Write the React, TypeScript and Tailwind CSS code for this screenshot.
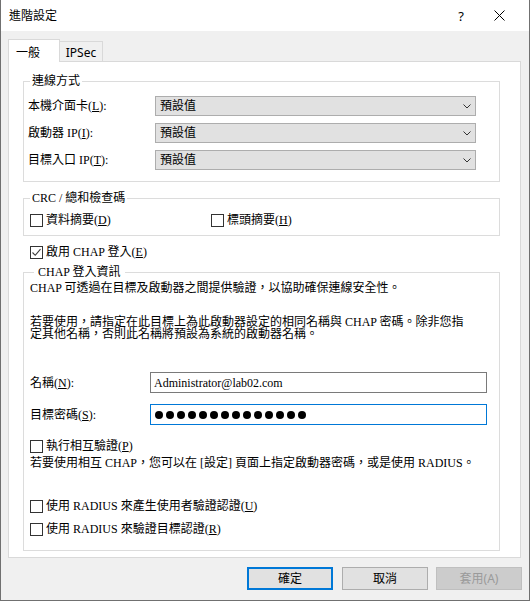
import React from 'react';

const serif = "font-[family-name:'Liberation_Serif','Noto_Sans_CJK_TC',serif]";
const sans = "font-[family-name:'Noto_Sans','Noto_Sans_CJK_TC',sans-serif]";

const Key = ({ k }: { k: string }) => (
  <>
    (<span className="underline underline-offset-[1px]">{k}</span>)
  </>
);

const CheckBox = ({
  checked = false,
  className = '',
  children,
}: {
  checked?: boolean;
  className?: string;
  children: React.ReactNode;
}) => (
  <div className={`flex items-center h-[16px] ${className}`}>
    <span className="w-[13px] h-[13px] border border-[#333333] bg-white flex items-center justify-center shrink-0">
      {checked && (
        <svg width="11" height="11" viewBox="0 0 11 11">
          <path d="M1.5 5.5 L4.2 8.3 L9.5 2.2" stroke="#3c3c3c" strokeWidth="1.1" fill="none" />
        </svg>
      )}
    </span>
    <span className="ml-[3px] leading-[16px] whitespace-nowrap">{children}</span>
  </div>
);

const Combo = () => (
  <div className="w-[321px] h-[20px] bg-[#e1e1e1] border border-[#adadad] flex items-center pl-[4px] pr-[4px]">
    <span className="leading-[16px]">預設值</span>
    <svg className="ml-auto" width="8" height="5" viewBox="0 0 8 5">
      <path d="M0.5 0.5 L4 4 L7.5 0.5" stroke="#333333" strokeWidth="1" fill="none" />
    </svg>
  </div>
);

const Group = ({
  title,
  legendClass,
  className = '',
  children,
}: {
  title: string;
  legendClass: string;
  className?: string;
  children: React.ReactNode;
}) => (
  <fieldset className={`border border-[#dcdcdc] ml-[14px] w-[477px] ${className}`}>
    <legend className={`h-[16px] leading-[16px] whitespace-nowrap ${legendClass}`}>{title}</legend>
    {children}
  </fieldset>
);

const Button = ({
  children,
  variant = 'normal',
  className = '',
}: {
  children: React.ReactNode;
  variant?: 'default' | 'normal' | 'disabled';
  className?: string;
}) => {
  const look =
    variant === 'default'
      ? 'border-2 border-[#0078d7] bg-[#e1e1e1] text-black'
      : variant === 'disabled'
      ? 'border border-[#bfbfbf] bg-[#cccccc] text-[#9a9a9a]'
      : 'border border-[#adadad] bg-[#e1e1e1] text-black';
  return (
    <div className={`w-[86px] h-[23px] flex items-center justify-center text-[12px] leading-[16px] ${sans} ${look} ${className}`}>
      {children}
    </div>
  );
};

export default function App() {
  return (
    <div className="w-[530px] h-[601px] flex flex-col bg-[#f0f0f0] border-x border-b border-[#707070] text-black">
      {/* title bar */}
      <div className={`h-[31px] shrink-0 bg-white flex items-center pl-[8px] ${sans}`}>
        <span className="text-[12px] leading-[16px]">進階設定</span>
        <span className="ml-auto text-[13px] leading-[16px] mr-[30px]">?</span>
        <svg className="mr-[24px]" width="11" height="11" viewBox="0 0 11 11">
          <path d="M0.5 0.5 L10.5 10.5 M10.5 0.5 L0.5 10.5" stroke="#000000" strokeWidth="1" fill="none" />
        </svg>
      </div>

      <div className="flex-1 flex flex-col px-[7px] pt-[8px]">
        {/* tabs */}
        <div className={`flex items-end h-[22px] text-[12px] ${sans}`}>
          <div className="relative z-10 w-[52px] h-[23px] -mb-px bg-white border-x border-t border-[#d9d9d9] flex items-center pl-[7px] pt-[3px] leading-[16px]">
            一般
          </div>
          <div className="w-[44px] h-[20px] -ml-px bg-[#f0f0f0] border-x border-t border-[#d9d9d9] flex items-center justify-center pt-[2px] leading-[16px]">
            IPSec
          </div>
        </div>

        {/* tab panel */}
        <div className={`w-[513px] h-[497px] border border-[#d9d9d9] bg-white flex flex-col text-[12px] ${serif}`}>
          <Group title="連線方式" legendClass="ml-[6px] px-[2px]" className="mt-[11px]">
            <div className="flex flex-col gap-[7px] pt-[7px] pb-[11px] pl-[4px]">
              <div className="flex items-center">
                <span className="w-[127px] leading-[16px] whitespace-nowrap">
                  本機介面卡<Key k="L" />:
                </span>
                <Combo />
              </div>
              <div className="flex items-center">
                <span className="w-[127px] leading-[16px] whitespace-nowrap">
                  啟動器 IP<Key k="I" />:
                </span>
                <Combo />
              </div>
              <div className="flex items-center">
                <span className="w-[127px] leading-[16px] whitespace-nowrap">
                  目標入口 IP<Key k="T" />:
                </span>
                <Combo />
              </div>
            </div>
          </Group>

          <Group title="CRC / 總和檢查碼" legendClass="ml-[6px] px-[2px]" className="mt-[8px]">
            <div className="flex pt-[6px] pb-[7px] pl-[6px]">
              <CheckBox className="w-[181px]">
                資料摘要<Key k="D" />
              </CheckBox>
              <CheckBox>
                標頭摘要<Key k="H" />
              </CheckBox>
            </div>
          </Group>

          <CheckBox checked className="mt-[8px] ml-[21px]">
            啟用 CHAP 登入<Key k="E" />
          </CheckBox>

          <Group title="CHAP 登入資訊" legendClass="ml-[10px] px-[4px]" className="mt-[4px]">
            <div className="flex flex-col pl-[6px] pb-[13px]">
              <div className="mt-[2px] leading-[12px] whitespace-nowrap">
                CHAP 可透過在目標及啟動器之間提供驗證，以協助確保連線安全性。
              </div>
              <div className="mt-[22px] leading-[12px] whitespace-nowrap">
                若要使用，請指定在此目標上為此啟動器設定的相同名稱與 CHAP 密碼。除非您指
                <br />
                定其他名稱，否則此名稱將預設為系統的啟動器名稱。
              </div>

              <div className="mt-[32px] flex items-center">
                <span className="w-[120px] leading-[16px] whitespace-nowrap">
                  名稱<Key k="N" />:
                </span>
                <div className="w-[337px] h-[21px] border border-[#7a7a7a] bg-white flex items-center pl-[3px] leading-[16px]">
                  Administrator@lab02.com
                </div>
              </div>
              <div className="mt-[11px] flex items-center">
                <span className="w-[120px] leading-[16px] whitespace-nowrap">
                  目標密碼<Key k="S" />:
                </span>
                <div className="w-[337px] h-[21px] border border-[#0078d7] bg-white flex items-center gap-[3px] pl-[4px]">
                  {Array.from({ length: 14 }).map((_, i) => (
                    <span key={i} className="w-[8px] h-[8px] rounded-full bg-black" />
                  ))}
                </div>
              </div>

              <CheckBox className="mt-[13px]">
                執行相互驗證<Key k="P" />
              </CheckBox>
              <div className="mt-[3px] leading-[12px] whitespace-nowrap">
                若要使用相互 CHAP，您可以在 [設定] 頁面上指定啟動器密碼，或是使用 RADIUS。
              </div>

              <CheckBox className="mt-[29px]">
                使用 RADIUS 來產生使用者驗證認證<Key k="U" />
              </CheckBox>
              <CheckBox className="mt-[7px]">
                使用 RADIUS 來驗證目標認證<Key k="R" />
              </CheckBox>
            </div>
          </Group>
        </div>

        {/* dialog buttons */}
        <div className="flex justify-end mt-[9px]">
          <Button variant="default" className="mr-[9px]">確定</Button>
          <Button className="mr-[8px]">取消</Button>
          <Button variant="disabled">套用(A)</Button>
        </div>
      </div>
    </div>
  );
}
